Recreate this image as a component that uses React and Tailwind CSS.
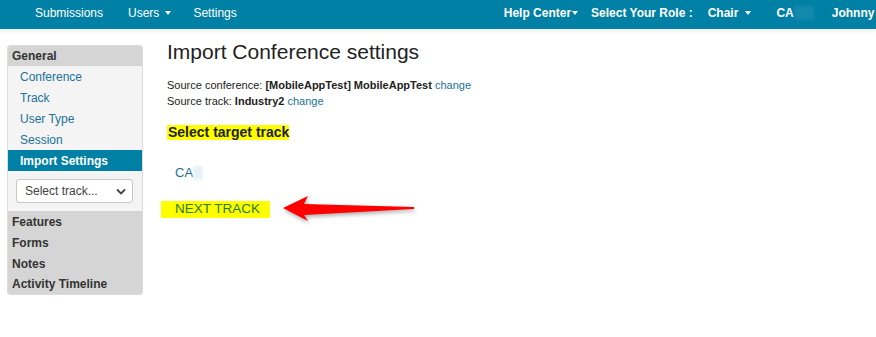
import React from "react";

export default function App() {
  return (
    <div className="w-[876px] h-[337px] bg-white overflow-hidden" style={{ fontFamily: '"Liberation Sans", Arial, sans-serif' }}>
      <div className="h-[29px] bg-[#0180a6] flex items-center text-white text-[12px] leading-[14px] pb-[3px] relative shadow-[0_2px_5px_rgba(0,0,0,0.08)] overflow-hidden">
        <span className="ml-[35px] shrink-0">Submissions</span>
        <span className="ml-[25px] flex items-center shrink-0">Users<span className="ml-[6px] border-x-[3.5px] border-x-transparent border-t-[4px] border-t-white"></span></span>
        <span className="ml-[22px] shrink-0">Settings</span>
        <div className="ml-[267px] flex items-center font-bold shrink-0">
          <span className="flex items-center">Help Center<span className="ml-[1px] border-x-[3.5px] border-x-transparent border-t-[4px] border-t-white"></span></span>
          <span className="ml-[13px]">Select Your Role :</span>
          <span className="ml-[15px] flex items-center">Chair<span className="ml-[7px] border-x-[3.5px] border-x-transparent border-t-[4px] border-t-white"></span></span>
          <span className="ml-[25px] flex items-center">CA<span className="inline-block w-[20px] h-[14px] bg-[#1a8cb0] opacity-70 blur-[1px]"></span></span>
          <span className="ml-[18px] flex items-center">Johnny<span className="ml-[4px] border-x-[3.5px] border-x-transparent border-t-[4px] border-t-white"></span></span>
        </div>
      </div>
      <div className="flex">
        <div className="ml-[7px] mt-[16px] w-[136px] border border-[#dcdcdc] rounded-[3px] overflow-hidden text-[12px] self-start">
          <div className="bg-[#d5d5d5] h-[20px] flex items-center px-[4px] font-bold text-[#333]">General</div>
          <div className="bg-[#f4f4f4]">
            <div className="h-[21px] flex items-center pl-[12px] text-[#21719a]">Conference</div>
            <div className="h-[21px] flex items-center pl-[12px] text-[#21719a]">Track</div>
            <div className="h-[21px] flex items-center pl-[12px] text-[#21719a]">User Type</div>
            <div className="h-[21px] flex items-center pl-[12px] text-[#21719a]">Session</div>
            <div className="h-[21px] flex items-center pl-[12px] bg-[#0180a6] text-white font-bold">Import Settings</div>
            <div className="py-[8px] pl-[8px] pr-[9px]">
              <div className="h-[24px] bg-white border border-[#c8c8c8] rounded-[3px] flex items-center pl-[8px] pr-[6px] text-[#444]">
                <span>Select track...</span>
                <svg className="ml-auto" width="10" height="7" viewBox="0 0 10 7"><path d="M1 1.5 L5 5.5 L9 1.5" stroke="#444" strokeWidth="1.8" fill="none" /></svg>
              </div>
            </div>
          </div>
          <div className="bg-[#d5d5d5] font-bold text-[#333]">
            <div className="h-[21px] flex items-center px-[4px]">Features</div>
            <div className="h-[21px] flex items-center px-[4px]">Forms</div>
            <div className="h-[21px] flex items-center px-[4px]">Notes</div>
            <div className="h-[20px] flex items-center px-[4px]">Activity Timeline</div>
          </div>
        </div>
        <div className="ml-[24px] mt-[11px] flex-1 relative">
          <h1 className="text-[21px] leading-[24px] font-medium text-[#222]">Import Conference settings</h1>
          <div className="mt-[13px] text-[11px] leading-[16px] text-[#222]">
            <div>Source conference: <span className="font-bold">[MobileAppTest] MobileAppTest</span> <span className="text-[#21719a]">change</span></div>
            <div>Source track: <span className="font-bold">Industry2</span> <span className="text-[#21719a]">change</span></div>
          </div>
          <div className="mt-[16px] flex">
            <span className="text-[14px] leading-[15px] font-bold text-[#222] bg-[#ffff00] pl-[1px]">Select target track</span>
          </div>
          <div className="mt-[25px] ml-[8px] text-[13px] leading-[15px] text-[#21719a] flex items-center">CA<span className="inline-block w-[10px] h-[14px] bg-[#e8f2f6] blur-[1px]"></span></div>
          <div className="mt-[15px] flex items-center">
            <div className="ml-[-6px] w-[109px] h-[17px] bg-[#ffff00] text-[13.5px] text-[#2a7d1c] flex items-center pl-[14px]">NEXT TRACK</div>
            <svg className="ml-[12px] drop-shadow-[1px_2px_2px_rgba(0,0,0,0.35)]" width="136" height="28" viewBox="0 0 136 28">
              <path d="M1 13 L26 1 L22 9 L132 12 L132 14 L22 20 L26 26 Z" fill="#ff0000" />
            </svg>
          </div>
        </div>
      </div>
    </div>
  );
}
